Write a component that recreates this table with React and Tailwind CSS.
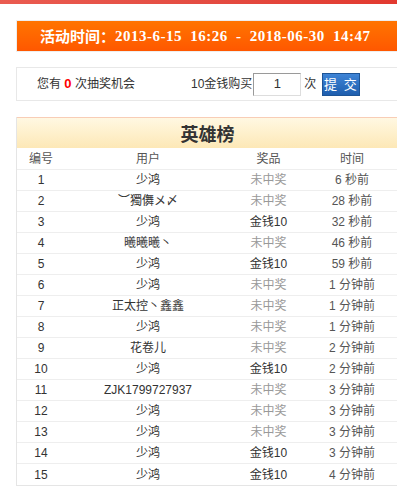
import React from 'react';

const rows = [
  ['1', '少鸿', '未中奖', '6 秒前'],
  ['2', '︶獨儛メ〆', '未中奖', '28 秒前'],
  ['3', '少鸿', '金钱10', '32 秒前'],
  ['4', '曦曦曦丶', '未中奖', '46 秒前'],
  ['5', '少鸿', '金钱10', '59 秒前'],
  ['6', '少鸿', '未中奖', '1 分钟前'],
  ['7', '正太控丶鑫鑫', '未中奖', '1 分钟前'],
  ['8', '少鸿', '未中奖', '1 分钟前'],
  ['9', '花卷儿', '未中奖', '2 分钟前'],
  ['10', '少鸿', '金钱10', '2 分钟前'],
  ['11', 'ZJK1799727937', '未中奖', '3 分钟前'],
  ['12', '少鸿', '未中奖', '3 分钟前'],
  ['13', '少鸿', '未中奖', '3 分钟前'],
  ['14', '少鸿', '金钱10', '3 分钟前'],
  ['15', '少鸿', '金钱10', '4 分钟前'],
];

const sans = "font-['Liberation_Sans','Noto_Sans_CJK_SC',sans-serif]";

export default function App() {
  return (
    <div className={`w-[397px] h-[497px] overflow-hidden bg-white text-[12px] text-[#333] ${sans}`}>
      <div className="h-[4px] bg-gradient-to-r from-[#ea5b50] via-[#e44c42] to-[#e2392f]" />

      <div className="pl-4 pt-4">
        {/* activity time bar */}
        <div className="w-[382px] h-[32px] border border-[#eee] bg-gradient-to-b from-[#ff7400] to-[#ff5700] flex items-center pl-[23px] text-white font-bold whitespace-nowrap">
          <span className="text-[15px] font-['Noto_Sans_CJK_SC',sans-serif]">活动时间：</span>
          <span className="text-[15px] tracking-[0.5px] [word-spacing:4px] font-['Liberation_Serif','Noto_Sans_CJK_SC',serif]">2013-6-15 16:26 - 2018-06-30 14:47</span>
        </div>

        {/* chances + buy */}
        <div className="mt-[15px] w-[382px] h-[34px] border-y border-l border-[#e8e8e8] flex items-center">
          <div className="pl-[20px] w-[174px]">
            您有 <span className="text-[#f00] font-bold text-[13px]">0</span> 次抽奖机会
          </div>
          <span>10金钱购买</span>
          <div className="ml-px w-[48px] h-[23px] border border-[#9a9a9a] border-b-[#ddd] border-r-[#ddd] flex items-center justify-center text-[13px]">1</div>
          <span className="ml-[3px]">次</span>
          <div className="ml-[6px] w-[38px] h-[23px] border border-[#1d5496] bg-gradient-to-b from-[#3e84d6] to-[#1e5eae] text-white text-[13px] flex items-center justify-center tracking-[2px] font-['Noto_Sans_CJK_SC',sans-serif]">
            提 交
          </div>
        </div>

        {/* hero ranking */}
        <div className="mt-[16px] w-[382px] border-l border-b border-[#e5e5e5]">
          <div className="h-[31px] border-t border-[#f8cdb6] bg-gradient-to-b from-[#fff8e2] to-[#fde8b6] flex items-center justify-center text-[18px] font-bold text-[#333] font-['Noto_Sans_CJK_SC',sans-serif]">
            英雄榜
          </div>
          <div className="grid grid-cols-[48px_166px_75px_1fr] h-[22px] border-b border-[#eee] items-center text-center text-[#555]">
            <span>编号</span>
            <span>用户</span>
            <span>奖品</span>
            <span>时间</span>
          </div>
          {rows.map(([n, user, prize, time]) => (
            <div key={n} className="grid grid-cols-[48px_166px_75px_1fr] h-[21px] border-b last:border-b-0 border-[#eee] items-center text-center">
              <span className="text-[#333]">{n}</span>
              <span className="text-[#333] whitespace-nowrap">{user}</span>
              <span className={prize === '未中奖' ? 'text-[#999]' : 'text-[#333]'}>{prize}</span>
              <span className="text-[#555]">{time}</span>
            </div>
          ))}
        </div>
      </div>
    </div>
  );
}
